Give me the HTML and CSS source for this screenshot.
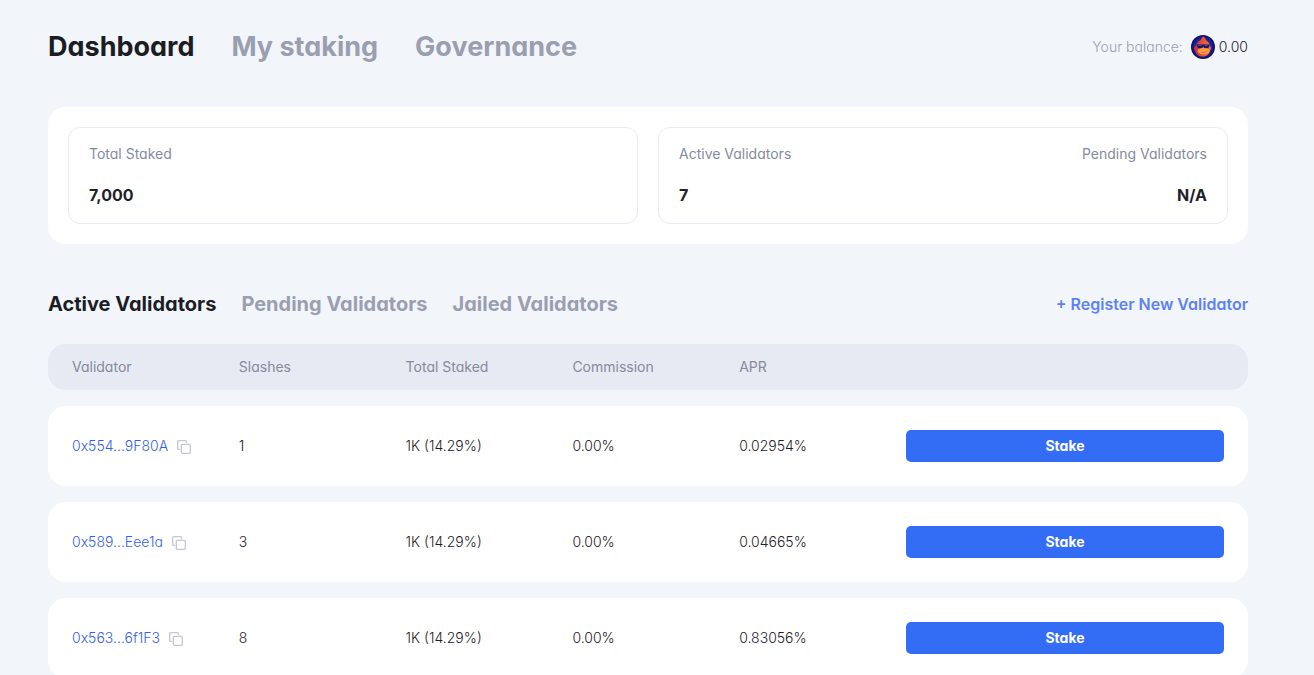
FILE: index.html
```html
<!DOCTYPE html>
<html lang="en">
<head>
<meta charset="utf-8">
<meta name="viewport" content="width=device-width, initial-scale=1">
<title>Staking dashboard</title>
<link rel="stylesheet" href="styles.css">
</head>
<body>
<svg class="sprite" aria-hidden="true">
  <symbol id="copy" viewBox="0 0 14 14">
    <path d="M3 9.500H1.700a1 1 0 0 1-1-1V1.700a1 1 0 0 1 1-1H8.500a1 1 0 0 1 1 1V3" fill="none" stroke="currentColor" stroke-width="1.300"/>
    <rect x="4.300" y="4.300" width="9" height="9" rx="1" fill="none" stroke="currentColor" stroke-width="1.300"/>
  </symbol>
</svg>
<div class="page">
  <header class="top">
    <nav class="main-nav">
      <a class="active" href="#">Dashboard</a>
      <a href="#">My staking</a>
      <a href="#">Governance</a>
    </nav>
    <div class="balance">
      <span class="balance-label">Your balance:</span>
      <svg class="token" viewBox="0 0 24 24" aria-hidden="true">
        <defs>
          <radialGradient id="disc"><stop offset=".5" stop-color="#2c35b8"/><stop offset="1" stop-color="#0d0b62"/></radialGradient>
          <linearGradient id="fur" x1="0" x2="1"><stop offset="0" stop-color="#b92a4c"/><stop offset=".5" stop-color="#f0502f"/><stop offset="1" stop-color="#f4762f"/></linearGradient>
        </defs>
        <circle cx="12" cy="12" r="12" fill="url(#disc)"/>
        <path d="M12 1.500c1.500.5 2.500 2 3 4 2.500 1 3.500 3 3.500 5.500 2 1 2 3 .5 4.500-.5 3.500-3 6-7 6-4.500 0-7-2-8-6C2.500 14 2.500 11.500 5 11c.5-3 2.500-5 5-6 .3-1.500 1-2.700 2-3.500z" fill="url(#fur)"/>
        <path d="M7.500 14.500l4-1.500 5.500 1c2.500 1 2 3 0 4-2.500 2-7 2-9.500-.5-1.200-1-1-2.300 0-3z" fill="#fa9f48"/>
        <path d="M5.500 9.500h13l-1 3.500h-4l-1.200-1.500-1.300 1.500H7z" fill="#17165f"/>
        <path d="M7.500 10.500h3m3.500 0h2.500" stroke="#2f5bc8" stroke-width="1"/>
        <path d="M10 17q3 1 6-.5" stroke="#d9603a" stroke-width=".8" fill="none"/>
      </svg>
      <span>0.00</span>
    </div>
  </header>

  <section class="stats">
    <div class="stat-box">
      <div class="stat"><span class="stat-label">Total Staked</span><strong>7,000</strong></div>
    </div>
    <div class="stat-box">
      <div class="stat"><span class="stat-label">Active Validators</span><strong>7</strong></div>
      <div class="stat end"><span class="stat-label">Pending Validators</span><strong>N/A</strong></div>
    </div>
  </section>

  <div class="list-head">
    <nav class="sub-nav">
      <a class="active" href="#">Active Validators</a>
      <a href="#">Pending Validators</a>
      <a href="#">Jailed Validators</a>
    </nav>
    <a class="register" href="#">+ Register New Validator</a>
  </div>

  <table class="validators">
    <thead>
      <tr><th class="col-first">Validator</th><th>Slashes</th><th>Total Staked</th><th>Commission</th><th>APR</th><th class="col-action"></th></tr>
    </thead>
    <tbody>
      <tr>
        <td><div class="address"><a href="#">0x554...9F80A</a><button class="copy" aria-label="Copy address"><svg><use href="#copy"/></svg></button></div></td>
        <td>1</td><td>1K (14.29%)</td><td>0.00%</td><td>0.02954%</td>
        <td><button class="stake">Stake</button></td>
      </tr>
      <tr>
        <td><div class="address"><a href="#">0x589...Eee1a</a><button class="copy" aria-label="Copy address"><svg><use href="#copy"/></svg></button></div></td>
        <td>3</td><td>1K (14.29%)</td><td>0.00%</td><td>0.04665%</td>
        <td><button class="stake">Stake</button></td>
      </tr>
      <tr>
        <td><div class="address"><a href="#">0x563...6f1F3</a><button class="copy" aria-label="Copy address"><svg><use href="#copy"/></svg></button></div></td>
        <td>8</td><td>1K (14.29%)</td><td>0.00%</td><td>0.83056%</td>
        <td><button class="stake">Stake</button></td>
      </tr>
    </tbody>
  </table>
</div>
</body>
</html>
```
FILE: styles.css
```css
* { box-sizing: border-box; }

body {
  margin: 0;
  background: #f2f5fa;
  color: #1f2129;
  font: 300 14px/20px Inter, "Liberation Sans", sans-serif;
  font-feature-settings: "cv11";
}

a { color: inherit; text-decoration: none; }
button { font: inherit; font-feature-settings: inherit; border: 0; padding: 0; cursor: pointer; }
.sprite { display: none; }

.page { padding: 29px 66px 0 48px; }

.top, .list-head { display: flex; justify-content: space-between; align-items: center; }
.top { margin-bottom: 42px; }

.main-nav, .sub-nav { display: flex; font-weight: 700; color: #9a9fb0; }
.main-nav { gap: 37px; font-size: 27px; line-height: 36px; }
.sub-nav { gap: 25px; font-size: 20px; line-height: 28px; }
.main-nav .active, .sub-nav .active { color: #1b1d25; }

.balance { display: flex; align-items: center; gap: 4px; }
.balance-label { color: #9a9fb0; margin-right: 4px; }
.token { width: 24px; height: 24px; }

.stats {
  display: grid;
  grid-template-columns: 1fr 1fr;
  gap: 20px;
  padding: 20px;
  margin-bottom: 46px;
  background: #fff;
  border-radius: 18px;
}
.stat-box {
  display: flex;
  justify-content: space-between;
  padding: 16px 20px;
  border: 1px solid #e6eaf3;
  border-radius: 12px;
}
.stat { display: flex; flex-direction: column; gap: 20px; }
.stat.end { text-align: right; }
.stat-label { color: #858b9d; font-weight: 400; }
.stat strong { font-size: 16px; line-height: 23px; font-weight: 700; }

.register { color: #5d82f2; font-size: 16px; font-weight: 600; }

.validators {
  width: 100%;
  margin-top: 10px;
  table-layout: fixed;
  border-collapse: separate;
  border-spacing: 0 16px;
}
.validators th, .validators td { padding: 0; text-align: left; }
.validators th { height: 46px; background: #e6eaf3; color: #858b9d; font-weight: 400; }
.validators td { height: 80px; background: #fff; }
.validators th:first-child, .validators td:first-child { padding-left: 24px; border-radius: 18px 0 0 18px; }
.validators th:last-child, .validators td:last-child { padding-right: 24px; border-radius: 0 18px 18px 0; }
.col-first { width: 15.9%; }
.col-action { width: 28.5%; }

.address { display: flex; align-items: center; gap: 9px; color: #355fe8; }
.copy { display: flex; padding-top: 2px; background: none; color: #c3c8d4; }
.copy svg { width: 14px; height: 14px; }

.stake {
  display: block;
  width: 100%;
  height: 32px;
  border-radius: 5px;
  background: #346df5;
  color: #fff;
  font-weight: 700;
}
```
